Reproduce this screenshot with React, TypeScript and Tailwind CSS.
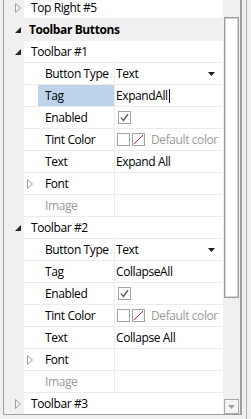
import React from "react";

const font = { fontFamily: '"Open Sans", "Noto Sans", sans-serif' };

function Collapsed() {
  return (
    <svg width="6" height="10" viewBox="0 0 6 10">
      <path d="M0.5 0.5 L5.5 5 L0.5 9.5 Z" fill="none" stroke="#a0a0a0" strokeWidth="1" />
    </svg>
  );
}

function Expanded() {
  return (
    <svg width="6" height="6" viewBox="0 0 6 6">
      <path d="M6 0 L6 6 L0 6 Z" fill="#262626" />
    </svg>
  );
}

function Gutter({ children }: { children?: React.ReactNode }) {
  return <div className="w-[20px] shrink-0 bg-[#f0f0f0] flex items-center pl-[11px]">{children}</div>;
}

function GroupRow({ label, open }: { label: string; open: boolean }) {
  return (
    <div className="flex h-[22px]">
      <Gutter>{open ? <Expanded /> : <Collapsed />}</Gutter>
      <div className="flex-1 flex items-center pl-[7px] border-b border-[#ececec] text-black">{label}</div>
    </div>
  );
}

function CategoryRow({ label }: { label: string }) {
  return (
    <div className="flex h-[22px] bg-[#f0f0f0]">
      <Gutter>
        <Expanded />
      </Gutter>
      <div className="flex-1 flex items-center pl-[5px] font-bold text-black">{label}</div>
    </div>
  );
}

function PropRow({
  label,
  children,
  selected,
  expandable,
  disabled,
}: {
  label: string;
  children?: React.ReactNode;
  selected?: boolean;
  expandable?: boolean;
  disabled?: boolean;
}) {
  return (
    <div className="flex h-[22px]">
      <Gutter />
      <div className="flex-1 flex border-b border-[#ececec]">
        <div className="w-[14px] shrink-0 flex items-center pl-[3px]">{expandable && <Collapsed />}</div>
        <div
          className={`w-[77px] shrink-0 flex items-center pl-[7px] border-r border-[#ececec] ${
            selected ? "bg-[#bcd4ea]" : ""
          } ${disabled ? "text-[#9a9a9a]" : "text-black"}`}
        >
          {label}
        </div>
        <div className="flex-1 flex items-center pl-[1px] pr-[7px] text-black">{children}</div>
      </div>
    </div>
  );
}

function Check() {
  return (
    <div className="w-[13px] h-[13px] ml-[2px] border border-[#a4a4a4] flex items-center justify-center">
      <svg width="9" height="9" viewBox="0 0 9 9">
        <path d="M1 4.5 L3.5 7.5 L8 1" fill="none" stroke="#6a6a6a" strokeWidth="1.6" />
      </svg>
    </div>
  );
}

function Tint() {
  return (
    <div className="flex items-center ml-[1px]">
      <div className="w-[13px] h-[13px] border border-[#a4a4a4] bg-white" />
      <div className="w-[13px] h-[13px] ml-[2px] border border-[#a4a4a4] bg-white">
        <svg width="11" height="11" viewBox="0 0 11 11">
          <path d="M1 10 L10 1" stroke="#e82020" strokeWidth="1" />
        </svg>
      </div>
      <span className="ml-[6px] text-[#9a9a9a]">Default color</span>
    </div>
  );
}

function Dropdown({ value }: { value: string }) {
  return (
    <div className="flex-1 flex items-center justify-between">
      <span>{value}</span>
      <svg width="7" height="4" viewBox="0 0 7 4" className="mr-[1px]">
        <path d="M0 0 L7 0 L3.5 4 Z" fill="#1a1a1a" />
      </svg>
    </div>
  );
}

function Toolbar({ n, tag, text, editing }: { n: number; tag: string; text: string; editing?: boolean }) {
  return (
    <>
      <GroupRow label={`Toolbar #${n}`} open />
      <PropRow label="Button Type">
        <Dropdown value="Text" />
      </PropRow>
      <PropRow label="Tag" selected={editing}>
        <span>{tag}</span>
        {editing && <span className="w-px h-[14px] bg-black ml-[1px]" />}
      </PropRow>
      <PropRow label="Enabled">
        <Check />
      </PropRow>
      <PropRow label="Tint Color">
        <Tint />
      </PropRow>
      <PropRow label="Text">{text}</PropRow>
      <PropRow label="Font" expandable />
      <PropRow label="Image" disabled />
    </>
  );
}

export default function App() {
  return (
    <div
      className="w-[251px] h-[419px] bg-[#f0f0f0] flex text-[12px] leading-none whitespace-nowrap tracking-[-0.4px]"
      style={font}
    >
      <div className="ml-[3px] w-[239px] h-[415px] flex border-l border-r-2 border-b border-[#a0a0a0]">
        <div className="w-[219px] h-full overflow-hidden bg-white">
          <div className="mt-[-3px]">
            <GroupRow label="Top Right #5" open={false} />
            <CategoryRow label="Toolbar Buttons" />
            <Toolbar n={1} tag="ExpandAll" text="Expand All" editing />
            <Toolbar n={2} tag="CollapseAll" text="Collapse All" />
            <GroupRow label="Toolbar #3" open={false} />
          </div>
        </div>
        <div className="w-[17px] h-full bg-[#f0f0f0] flex flex-col items-center">
          <div className="mt-[17px] w-[15px] h-[281px] border border-[#9c9c9c] bg-white shadow-[inset_0_0_0_1px_#d6d6d6]" />
          <div className="flex-1" />
          <div className="w-[15px] h-[15px] border border-[#a8a8a8] bg-[#f4f4f4] flex items-center justify-center">
            <svg width="7" height="4" viewBox="0 0 7 4">
              <path d="M0 0 L7 0 L3.5 4 Z" fill="#a0a0a0" />
            </svg>
          </div>
        </div>
      </div>
      <div className="ml-[4px] w-px h-full bg-[#b0b0b0]" />
    </div>
  );
}
